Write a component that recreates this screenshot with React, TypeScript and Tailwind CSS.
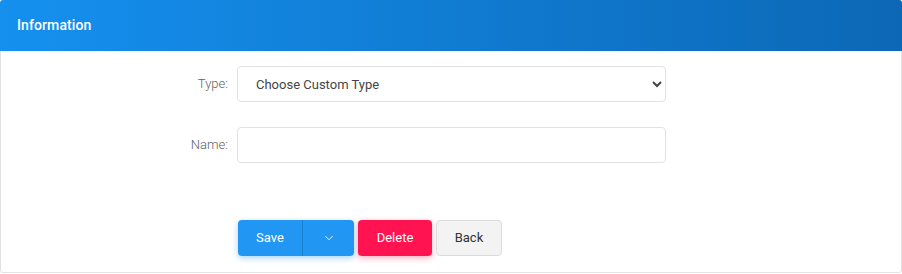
import { ChevronDown } from 'lucide-react';

export default function App() {
    return (
        <div className="w-[902px] h-[274px] bg-white font-['Roboto',sans-serif]">
            <div className="h-[273px] border border-[#e3e3e3] rounded-[3px] flex flex-col">
                {/* Header */}
                <div className="h-[51px] -mx-px -mt-px flex items-center px-[17px] rounded-t-[3px] bg-gradient-to-r from-[#1590ef] to-[#0c68b6]">
                    <h2 className="text-[14px] font-medium text-white tracking-[0.1px]">Information</h2>
                </div>

                <div className="pt-[15px] flex flex-col gap-[25px]">
                    <div className="flex items-center">
                        <label className="w-[236px] pr-[9px] text-right text-[13px] font-light text-[#5f5f5f]">Type:</label>
                        <select className="w-[429px] h-[36px] border border-[#e2e2e2] rounded-[4px] pl-[14px] pr-[6px] text-[13px] text-[#444] bg-white outline-none">
                            <option>Choose Custom Type</option>
                        </select>
                    </div>
                    <div className="flex items-center">
                        <label className="w-[236px] pr-[9px] text-right text-[13px] font-light text-[#5f5f5f]">Name:</label>
                        <input className="w-[429px] h-[36px] border border-[#e2e2e2] rounded-[4px] px-[14px] text-[13px] text-[#444] outline-none" />
                    </div>
                </div>

                <div className="mt-[57px] pl-[237px] flex items-center gap-[4px]">
                    <div className="flex h-[36px] rounded-[4px] bg-[#2196f3] shadow-[0_2px_6px_rgba(33,150,243,0.4)] text-white text-[13px]">
                        <button className="w-[65px] h-full border-r border-[#1a80d4]">Save</button>
                        <button className="w-[51px] h-full flex items-center justify-center">
                            <ChevronDown className="w-[14px] h-[14px]" strokeWidth={1.5} />
                        </button>
                    </div>
                    <button className="w-[74px] h-[36px] rounded-[4px] bg-[#ff1351] text-white text-[13px] shadow-[0_2px_6px_rgba(255,19,81,0.35)]">Delete</button>
                    <button className="w-[66px] h-[36px] rounded-[4px] bg-[#f3f3f3] border border-[#dcdcdc] text-[#333] text-[13px]">Back</button>
                </div>
            </div>
        </div>
    );
}
